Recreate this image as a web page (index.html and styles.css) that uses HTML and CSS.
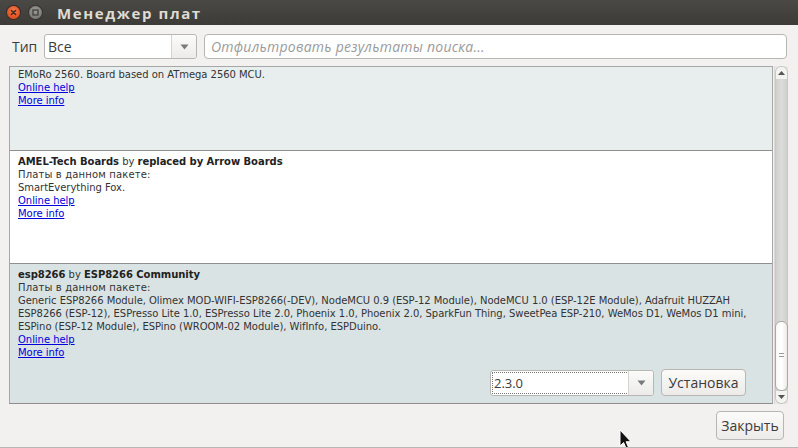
FILE: index.html
```html
<!DOCTYPE html>
<html lang="ru">
<head>
<meta charset="utf-8">
<title>Менеджер плат</title>
<link rel="stylesheet" href="styles.css">
</head>
<body>
<div class="window">
  <div class="titlebar">
    <span class="wbtn close"><svg width="13" height="13" viewBox="0 0 13 13"><path d="M4.4 4.4 L8.6 8.6 M8.6 4.4 L4.4 8.6" stroke="#3a2a20" stroke-width="1.4" stroke-linecap="round"/></svg></span>
    <span class="wbtn mini"><svg width="13" height="13" viewBox="0 0 13 13"><rect x="4" y="4" width="5" height="5" fill="none" stroke="#3c3b37" stroke-width="1.2"/></svg></span>
    <span class="title">Менеджер плат</span>
  </div>

  <div class="toolbar">
    <span class="label">Тип</span>
    <div class="combo type-combo">
      <span class="combo-text">Все</span>
      <span class="combo-arrow"><svg width="9" height="6" viewBox="0 0 9 6"><path d="M0.5 0.5 H8.5 L4.5 5.5 Z" fill="#7a7a7a"/></svg></span>
    </div>
    <div class="search">Отфильтровать результаты поиска...</div>
  </div>

  <div class="list">
    <div class="items">
      <div class="item item-a">
        <div class="line">EMoRo 2560. Board based on ATmega 2560 MCU.</div>
        <div class="line"><a class="link">Online help</a></div>
        <div class="line"><a class="link">More info</a></div>
      </div>
      <div class="item item-b">
        <div class="line"><b>AMEL-Tech Boards</b> by <b>replaced by Arrow Boards</b></div>
        <div class="line cyr">Платы в данном пакете:</div>
        <div class="line">SmartEverything Fox.</div>
        <div class="line"><a class="link">Online help</a></div>
        <div class="line"><a class="link">More info</a></div>
      </div>
      <div class="item item-c">
        <div class="line"><b>esp8266</b> by <b>ESP8266 Community</b></div>
        <div class="line cyr">Платы в данном пакете:</div>
        <div class="line">Generic ESP8266 Module, Olimex MOD-WIFI-ESP8266(-DEV), NodeMCU 0.9 (ESP-12 Module), NodeMCU 1.0 (ESP-12E Module), Adafruit HUZZAH</div>
        <div class="line">ESP8266 (ESP-12), ESPresso Lite 1.0, ESPresso Lite 2.0, Phoenix 1.0, Phoenix 2.0, SparkFun Thing, SweetPea ESP-210, WeMos D1, WeMos D1 mini,</div>
        <div class="line">ESPino (ESP-12 Module), ESPino (WROOM-02 Module), WifInfo, ESPDuino.</div>
        <div class="line"><a class="link">Online help</a></div>
        <div class="line"><a class="link">More info</a></div>
        <div class="actions">
          <div class="combo version-combo">
            <span class="combo-text focus">2.3.0</span>
            <span class="combo-arrow"><svg width="9" height="6" viewBox="0 0 9 6"><path d="M0.5 0.5 H8.5 L4.5 5.5 Z" fill="#7a7a7a"/></svg></span>
          </div>
          <button class="btn install">Установка</button>
        </div>
      </div>
    </div>
    <div class="scrollbar">
      <div class="sb-up"><svg width="7" height="4" viewBox="0 0 7 4"><path d="M0 4 L3.5 0 L7 4 Z" fill="#555"/></svg></div>
      <div class="sb-track">
        <div class="sb-thumb"><span class="grip"></span></div>
      </div>
      <div class="sb-down"><svg width="7" height="4" viewBox="0 0 7 4"><path d="M0 0 L3.5 4 L7 0 Z" fill="#555"/></svg></div>
    </div>
  </div>

  <div class="footer">
    <button class="btn closebtn">Закрыть</button>
  </div>

  <svg class="cursor" width="14" height="22" viewBox="0 0 14 22"><path d="M1 1 L1 17 L4.6 13.6 L7.4 20 L9.8 19 L7.1 12.7 L12 12.7 Z" fill="#111" stroke="#fff" stroke-width="1" stroke-linejoin="round"/></svg>
</div>
</body>
</html>
```

FILE: styles.css
```css
html, body {
  margin: 0;
  padding: 0;
}
body {
  background: #f2f1f0;
  font-family: "DejaVu Sans", sans-serif;
  overflow: hidden;
}
.window {
  width: 798px;
  height: 448px;
  position: relative;
  display: flex;
  flex-direction: column;
  overflow: hidden;
  background: #f2f1f0;
  border-bottom: 1px solid #b9b7b3;
  box-sizing: border-box;
}
.titlebar {
  height: 25px;
  flex: none;
  display: flex;
  align-items: center;
  padding-left: 7px;
  background: linear-gradient(#4a4945, #3c3b37);
}
.wbtn {
  width: 13px;
  height: 13px;
  border-radius: 50%;
  display: flex;
  align-items: center;
  justify-content: center;
}
.wbtn svg { display: block; }
.close {
  background: radial-gradient(circle at 50% 35%, #f47a4e, #e0501f 70%);
  box-shadow: 0 0 0 1px #3a2a22;
}
.mini {
  margin-left: 9px;
  background: radial-gradient(circle at 50% 35%, #9b9a95, #7c7b76 70%);
  box-shadow: 0 0 0 1px #35342f;
}
.title {
  margin-left: 15px;
  color: #dfdbd2;
  font-family: "Open Sans", "DejaVu Sans", sans-serif;
  font-weight: 700;
  font-size: 15px;
  letter-spacing: 1.6px;
}
.toolbar {
  flex: none;
  height: 25px;
  margin: 9px 11px 7px 12px;
  display: flex;
  align-items: stretch;
}
.label {
  font-family: "Open Sans", sans-serif;
  font-size: 14px;
  color: #3c3c3c;
  display: flex;
  align-items: center;
  width: 32px;
}
.combo {
  display: flex;
  background: #fff;
  border: 1px solid #b8b6b2;
  border-radius: 3px;
  box-sizing: border-box;
}
.type-combo {
  width: 153px;
}
.combo-text {
  flex: 1;
  display: flex;
  align-items: center;
  padding-left: 3px;
  font-family: "Open Sans", sans-serif;
  font-size: 14px;
  color: #3c3c3c;
}
.combo-arrow {
  width: 24px;
  border-left: 1px solid #d6d4d0;
  background: linear-gradient(#fbfbfa, #ecebe9);
  display: flex;
  align-items: center;
  justify-content: center;
  border-radius: 0 3px 3px 0;
}
.combo-arrow svg { display: block; }
.search {
  margin-left: 7px;
  flex: 1;
  background: #fff;
  border: 1px solid #b8b6b2;
  border-radius: 4px;
  display: flex;
  align-items: center;
  padding-left: 6px;
  font-family: "Open Sans", sans-serif;
  font-style: italic;
  font-size: 14px;
  color: #9b9b9b;
  letter-spacing: 0.25px;
}
.list {
  flex: none;
  height: 338px;
  margin: 0 10px 0 9px;
  display: flex;
}
.items {
  width: 765px;
  box-sizing: border-box;
  border: 1px solid #a7a7a7;
  border-bottom-color: #8e8e8e;
  display: flex;
  flex-direction: column;
  overflow: hidden;
}
.item {
  padding-left: 8px;
  font-size: 10px;
  line-height: 13px;
  color: #333;
  border-bottom: 1px solid #8f8f8f;
  box-sizing: border-box;
  flex: none;
  letter-spacing: -0.04px;
}
.item b { font-weight: 700; color: #222; }
.line { white-space: nowrap; }
.cyr { letter-spacing: 0.15px; }
.item-a {
  height: 84px;
  background: #e8eeee;
  padding-top: 1px;
}
.item-b {
  height: 113px;
  background: #ffffff;
  padding-top: 4px;
}
.item-c {
  flex: 1;
  border-bottom: none;
  background: #dae3e3;
  padding-top: 4px;
}
.link {
  color: #0000dd;
  text-decoration: underline;
}
.actions {
  display: flex;
  margin: 10px 0 0 472px;
  gap: 7px;
}
.version-combo {
  width: 164px;
  height: 26px;
  margin-top: 1px;
}
.focus {
  margin: 2px 0 2px 2px;
  padding-left: 1px;
  outline: 1px dotted #777;
  font-size: 13px;
}
.btn {
  font-family: "Open Sans", sans-serif;
  font-size: 14px;
  color: #3c3c3c;
  border: 1px solid #b8b6b2;
  border-radius: 4px;
  background: linear-gradient(#fbfbfa, #ecebe9);
  padding: 0;
  box-sizing: border-box;
}
.install {
  width: 85px;
  height: 27px;
}
.scrollbar {
  width: 13px;
  margin-left: 1px;
  display: flex;
  flex-direction: column;
  background: #ebeae8;
  border-left: 1px solid #dcdad7;
}
.sb-up, .sb-down {
  height: 13px;
  flex: none;
  display: flex;
  align-items: center;
  justify-content: center;
  background: #f3f3f2;
  border: 1px solid #c9c7c3;
  box-sizing: border-box;
}
.sb-up {
  border-radius: 6px 6px 0 0;
  border-bottom: none;
}
.sb-down {
  border-radius: 0 0 6px 6px;
  border-top: none;
}
.sb-up svg, .sb-down svg { display: block; }
.sb-track {
  flex: 1;
  display: flex;
  flex-direction: column;
  justify-content: flex-end;
  background: linear-gradient(90deg, #cfcfcd, #dcdcda 50%, #cfcfcd);
  border-left: 1px solid #c9c7c3;
  border-right: 1px solid #c9c7c3;
}
.sb-thumb {
  height: 68px;
  margin: 0 -1px;
  border: 1px solid #aaa8a4;
  border-radius: 6px;
  background: linear-gradient(90deg, #f7f7f6, #ffffff 50%, #ecebe9);
  display: flex;
  align-items: center;
  justify-content: center;
}
.grip {
  width: 5px;
  height: 6px;
  background: repeating-linear-gradient(#9a9a9a 0 1px, transparent 1px 3px);
}
.footer {
  flex: 1;
  display: flex;
  justify-content: flex-end;
  align-items: flex-start;
  padding: 7px 14px 0 0;
}
.closebtn {
  width: 68px;
  height: 29px;
}
.cursor {
  position: absolute;
  left: 619px;
  top: 429px;
}
```
